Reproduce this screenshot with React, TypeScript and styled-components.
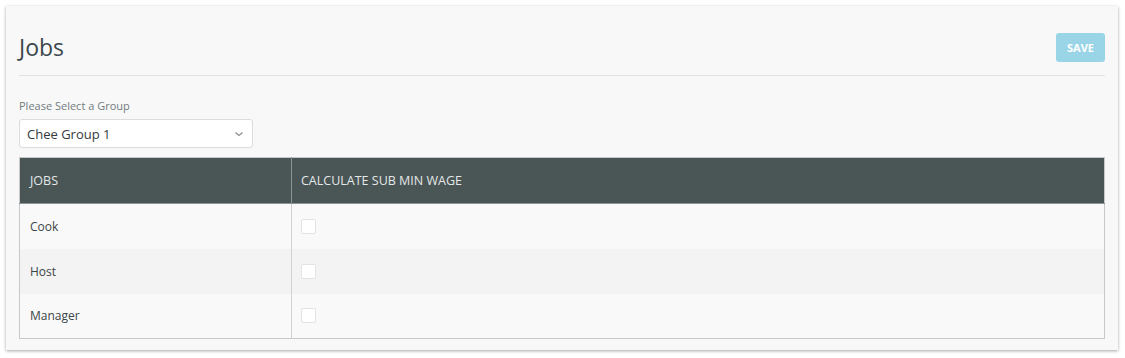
import React from 'react';
import styled, { createGlobalStyle } from 'styled-components';

const GlobalStyle = createGlobalStyle`
  body {
    margin: 0;
    background: #ffffff;
    font-family: 'Open Sans', 'Liberation Sans', sans-serif;
  }
`;

const Card = styled.section`
  margin: 6px;
  width: 1112px;
  box-sizing: border-box;
  padding: 27px 13px 11px;
  background: #f8f8f8;
  box-shadow: 0 1px 3px rgba(0, 0, 0, 0.35);
`;

const Header = styled.header`
  display: flex;
  align-items: center;
  justify-content: space-between;
  padding-bottom: 13px;
  border-bottom: 1px solid #e2e2e2;
`;

const Title = styled.h1`
  margin: 0;
  font-size: 23px;
  font-weight: 400;
  line-height: 29px;
  color: #3b474c;
`;

const SaveButton = styled.button`
  width: 49px;
  height: 29px;
  border: none;
  border-radius: 3px;
  background: #9ad5e7;
  color: #ffffff;
  font-family: inherit;
  font-size: 11px;
  font-weight: 700;
  text-transform: uppercase;
  padding: 0;
`;

const Field = styled.div`
  display: flex;
  flex-direction: column;
  gap: 5px;
  margin-top: 22px;
`;

const Label = styled.label`
  font-size: 11px;
  line-height: 16px;
  color: #737b7e;
`;

const Select = styled.div`
  display: flex;
  align-items: center;
  justify-content: space-between;
  width: 234px;
  height: 29px;
  box-sizing: border-box;
  padding: 0 8px 0 7px;
  background: #ffffff;
  border: 1px solid #dcdcdc;
  border-radius: 3px;
  font-size: 13px;
  color: #333a3d;
`;

const Table = styled.table`
  width: 100%;
  margin-top: 9px;
  border-collapse: collapse;
  border: 1px solid #c8c8c8;
`;

const HeadCell = styled.th<{ $width?: string }>`
  height: 45px;
  padding: 0 10px;
  background: #4a5556;
  border-bottom: 1px solid #8c9394;
  color: #e4e8e8;
  font-size: 12.5px;
  font-weight: 400;
  text-align: left;
  text-transform: uppercase;
  width: ${(p) => p.$width || 'auto'};

  & + & {
    border-left: 1px solid #8c9394;
    padding-left: 9px;
  }
`;

const Row = styled.tr<{ $striped?: boolean }>`
  height: 45px;
  background: ${(p) => (p.$striped ? '#f3f3f3' : '#f9f9f9')};
`;

const Cell = styled.td`
  padding: 0 10px;
  font-size: 12px;
  color: #3b4548;

  & + & {
    border-left: 1px solid #d2d2d2;
    padding-left: 9px;
  }
`;

const Checkbox = styled.span`
  display: block;
  width: 15px;
  height: 15px;
  box-sizing: border-box;
  background: #ffffff;
  border: 1px solid #e3e3e3;
  border-radius: 2px;
`;

const jobs = ['Cook', 'Host', 'Manager'];

const Chevron = () => (
  <svg width="10" height="6" viewBox="0 0 10 6" fill="none">
    <path d="M1.5 1.5L5 4.5L8.5 1.5" stroke="#8a8f92" strokeWidth="1.3" />
  </svg>
);

const App: React.FC = () => {
  return (
    <>
      <GlobalStyle />
      <Card>
        <Header>
          <Title>Jobs</Title>
          <SaveButton>Save</SaveButton>
        </Header>
        <Field>
          <Label>Please Select a Group</Label>
          <Select>
            Chee Group 1
            <Chevron />
          </Select>
        </Field>
        <Table>
          <thead>
            <tr>
              <HeadCell $width="251px">Jobs</HeadCell>
              <HeadCell>Calculate Sub Min Wage</HeadCell>
            </tr>
          </thead>
          <tbody>
            {jobs.map((job, i) => (
              <Row key={job} $striped={i % 2 === 1}>
                <Cell>{job}</Cell>
                <Cell>
                  <Checkbox />
                </Cell>
              </Row>
            ))}
          </tbody>
        </Table>
      </Card>
    </>
  );
};

export default App;
